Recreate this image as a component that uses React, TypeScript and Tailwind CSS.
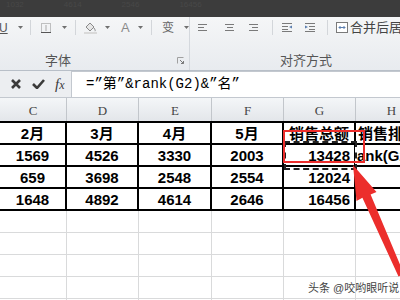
const colWidths = ['w-[67px]', 'w-[72px]', 'w-[73px]', 'w-[72px]', 'w-[72px]', 'w-[72px]'];
const letters = ['C', 'D', 'E', 'F', 'G', 'H'];

const rows = [
  ['2月', '3月', '4月', '5月', '销售总额', '销售排名'],
  ['1569', '4526', '3330', '2003', '13428', 'ank(G2)&”名”'],
  ['659', '3698', '2548', '2554', '12024', ''],
  ['1648', '4892', '4614', '2646', '16456', ''],
];

const sans = "font-['Liberation_Sans','Noto_Sans_CJK_SC',sans-serif]";

function Caret({ className = '' }: { className?: string }) {
  return (
    <svg width="5" height="3" viewBox="0 0 5 3" className={className}>
      <path d="M0 0h5L2.5 3z" fill="#6f6f6f" />
    </svg>
  );
}

function Sep({ className = '' }: { className?: string }) {
  return <div className={`h-[15px] w-px bg-[#d3d6da] ${className}`} />;
}

function AlignIcon({ kind }: { kind: 'left' | 'center' | 'right' }) {
  const x = kind === 'left' ? 0 : kind === 'center' ? 2 : 3;
  return (
    <svg width="9" height="8" viewBox="0 0 9 8">
      <rect x="0" y="0" width="9" height="1" fill="#7a7a7a" />
      <rect x={x} y="3" width="6" height="1" fill="#7a7a7a" />
      <rect x="0" y="6" width="9" height="1" fill="#7a7a7a" />
    </svg>
  );
}

function IndentIcon({ flip }: { flip?: boolean }) {
  return (
    <svg width="10" height="9" viewBox="0 0 10 9" className={flip ? '-scale-x-100' : ''}>
      <rect x="0" y="0" width="10" height="1" fill="#7a7a7a" />
      <rect x="4" y="3" width="6" height="1" fill="#7a7a7a" />
      <rect x="4" y="6" width="6" height="1" fill="#7a7a7a" />
      <path d="M0 2.5l3 1.5-3 1.5z" fill="#5c7fb0" />
      <rect x="0" y="8" width="10" height="1" fill="#7a7a7a" />
    </svg>
  );
}

export default function App() {
  return (
    <div className={`relative h-[300px] w-[400px] overflow-hidden bg-white ${sans}`}>
      {/* dark strip left over from the crop */}
      <div className="flex h-[17px] items-start gap-[40px] bg-[#3c3c3c] pl-[6px] text-[8px] leading-[9px] text-[#484848]">
        <span>1032</span>
        <span>4614</span>
        <span>2546</span>
        <span>16456</span>
      </div>

      {/* ribbon */}
      <div className="flex h-[54px] border-b border-[#b8bfc8] bg-gradient-to-b from-[#f5f6f7] to-[#e8ebef]">
        <div className="flex w-[195px] flex-col border-r border-[#d4d8dd]">
          <div className="flex h-[21px] items-center">
            <span className="-ml-[1px] w-[9px] text-[12px] leading-none text-[#555] underline">U</span>
            <Caret className="ml-[10px]" />
            <Sep className="ml-[7px]" />
            <svg width="10" height="10" viewBox="0 0 10 10" className="ml-[10px]">
              <rect x="0.5" y="0.5" width="9" height="9" fill="none" stroke="#8a8a8a" strokeDasharray="1 1" />
              <rect x="0" y="9" width="10" height="1" fill="#555" />
              <rect x="4.5" y="2" width="1" height="6" fill="#aaa" />
            </svg>
            <Caret className="ml-[11px]" />
            <Sep className="ml-[8px]" />
            <svg width="13" height="13" viewBox="0 0 13 13" className="ml-[8px]">
              <path d="M2 6l4-4 4 4-4 4z" fill="#e6e6e6" stroke="#8a8a8a" />
              <path d="M10 7c1 1.5 1.5 2.5 1 3.2" stroke="#8a8a8a" fill="none" />
              <rect x="0" y="11" width="13" height="2" fill="#d9d9d9" />
            </svg>
            <Caret className="ml-[8px]" />
            <span className="ml-[11px] w-[8px] text-[13px] leading-none text-[#8a8a8a]">A</span>
            <Caret className="ml-[9px]" />
            <Sep className="ml-[8px]" />
            <span className="ml-[10px] w-[13px] text-[12px] leading-none text-[#666]">变</span>
            <Caret className="ml-[9px]" />
          </div>
          <div className="flex flex-1 items-center justify-between pl-[45px] pr-[5px] pt-[12px]">
            <span className="text-[13px] leading-none text-[#555]">字体</span>
            <svg width="7" height="7" viewBox="0 0 7 7">
              <path d="M0.5 6.5v-6h6" fill="none" stroke="#a0a0a0" />
              <path d="M3 3l3.5 3.5M6.5 4v2.5H4" fill="none" stroke="#7a7a7a" />
            </svg>
          </div>
        </div>
        <div className="flex flex-1 flex-col">
          <div className="flex h-[21px] items-center">
            <span className="ml-[8px] flex"><AlignIcon kind="left" /></span>
            <span className="ml-[18px] flex"><AlignIcon kind="center" /></span>
            <span className="ml-[15px] flex"><AlignIcon kind="right" /></span>
            <Sep className="ml-[14px]" />
            <span className="ml-[9px] flex"><IndentIcon flip /></span>
            <span className="ml-[13px] flex"><IndentIcon /></span>
            <Sep className="ml-[12px]" />
            <svg width="12" height="11" viewBox="0 0 12 11" className="ml-[8px]">
              <rect x="0.5" y="0.5" width="11" height="10" fill="#fff" stroke="#7a7a7a" />
              <path d="M3 5.5h6M3 5.5l1.5-1.5M3 5.5l1.5 1.5M9 5.5l-1.5-1.5M9 5.5l-1.5 1.5" stroke="#5c7fb0" />
            </svg>
            <span className="ml-[2px] whitespace-nowrap text-[13px] leading-none text-[#444]">合并后居中</span>
          </div>
          <div className="flex flex-1 items-center pl-[90px] pt-[12px]">
            <span className="text-[13px] leading-none text-[#555]">对齐方式</span>
          </div>
        </div>
      </div>

      {/* formula bar */}
      <div className="flex h-[27px] border-b border-[#c3c8cf] bg-[#eceef1]">
        <div className="flex w-[71px] items-center pl-[10px]">
          <svg width="12" height="10" viewBox="0 0 12 10">
            <path d="M2 1l8 8M10 1l-8 8" stroke="#3b3b3b" strokeWidth="2.6" />
          </svg>
          <svg width="13" height="10" viewBox="0 0 13 10" className="ml-[10px]">
            <path d="M1 5l4 4 7-8" stroke="#3b3b3b" strokeWidth="2.6" fill="none" />
          </svg>
          <span className="ml-[10px] font-['Liberation_Serif',serif] text-[15px] italic leading-none text-[#3b3b3b]">
            f<span className="text-[12px]">x</span>
          </span>
        </div>
        <div className="flex flex-1 items-center border-l border-t border-[#c3c8cf] bg-white pl-[14px] font-['Liberation_Mono','Noto_Sans_CJK_SC',monospace] text-[14px] text-black">
          =”第”&amp;rank(G2)&amp;”名”
        </div>
      </div>

      {/* column letters */}
      <div className="flex h-[23px] w-[428px] bg-gradient-to-b from-[#f4f6f8] to-[#e3e6ea]">
        {letters.map((l, i) => (
          <div
            key={l}
            className={`${colWidths[i]} flex shrink-0 items-center justify-center border-r border-[#c2c6cb] pt-[3px] font-['Liberation_Serif',serif] text-[13px] text-[#454545]`}
          >
            {l}
          </div>
        ))}
      </div>

      {/* data table */}
      <div className="w-[428px] border-t-2 border-black">
        {rows.map((r, ri) => (
          <div key={ri} className="flex h-[22px]">
            {r.map((v, ci) => {
              let align = 'justify-center';
              if (ci === 4 && ri > 0) align = 'justify-end pr-[4px]';
              if (ci === 5) align = ri === 0 ? 'justify-start pl-[2px]' : 'justify-start pl-[1px]';
              return (
                <div
                  key={ci}
                  className={`${colWidths[ci]} ${align} flex shrink-0 items-center overflow-hidden whitespace-nowrap border-b-2 border-r-2 border-black text-[15px] font-bold leading-none text-black`}
                >
                  {v}
                </div>
              );
            })}
          </div>
        ))}
        {[0, 1, 2, 3, 4].map((ri) => (
          <div key={`e${ri}`} className="flex h-[22px]">
            {colWidths.map((w, ci) => (
              <div key={ci} className={`${w} shrink-0 border-b border-r border-[#d9dadb]`} />
            ))}
          </div>
        ))}
      </div>

      {/* marquee round G2 */}
      <div className="absolute left-[284px] top-[141px] h-[29px] w-[73px] border-2 border-white" />
      <div className="absolute left-[284px] top-[141px] h-[29px] w-[73px] border-2 border-dashed border-[#222]" />

      {/* annotation: red frame and arrow */}
      <svg className="pointer-events-none absolute left-0 top-0" width="400" height="300" viewBox="0 0 400 300">
        <rect x="284" y="131" width="80" height="31" fill="none" stroke="#ec2e2c" strokeWidth="2" />
        <polygon
          points="353,165 376.5,192 370.6,194.6 404,274 398.5,276.4 362.4,197.8 356.5,201"
          fill="#ec2e2c"
        />
      </svg>

      <div className="absolute left-[308px] top-[280px] whitespace-nowrap text-[11px] text-[#444] [text-shadow:0_0_2px_#fff]">
        头条 @咬哟眼听说
      </div>
    </div>
  );
}
